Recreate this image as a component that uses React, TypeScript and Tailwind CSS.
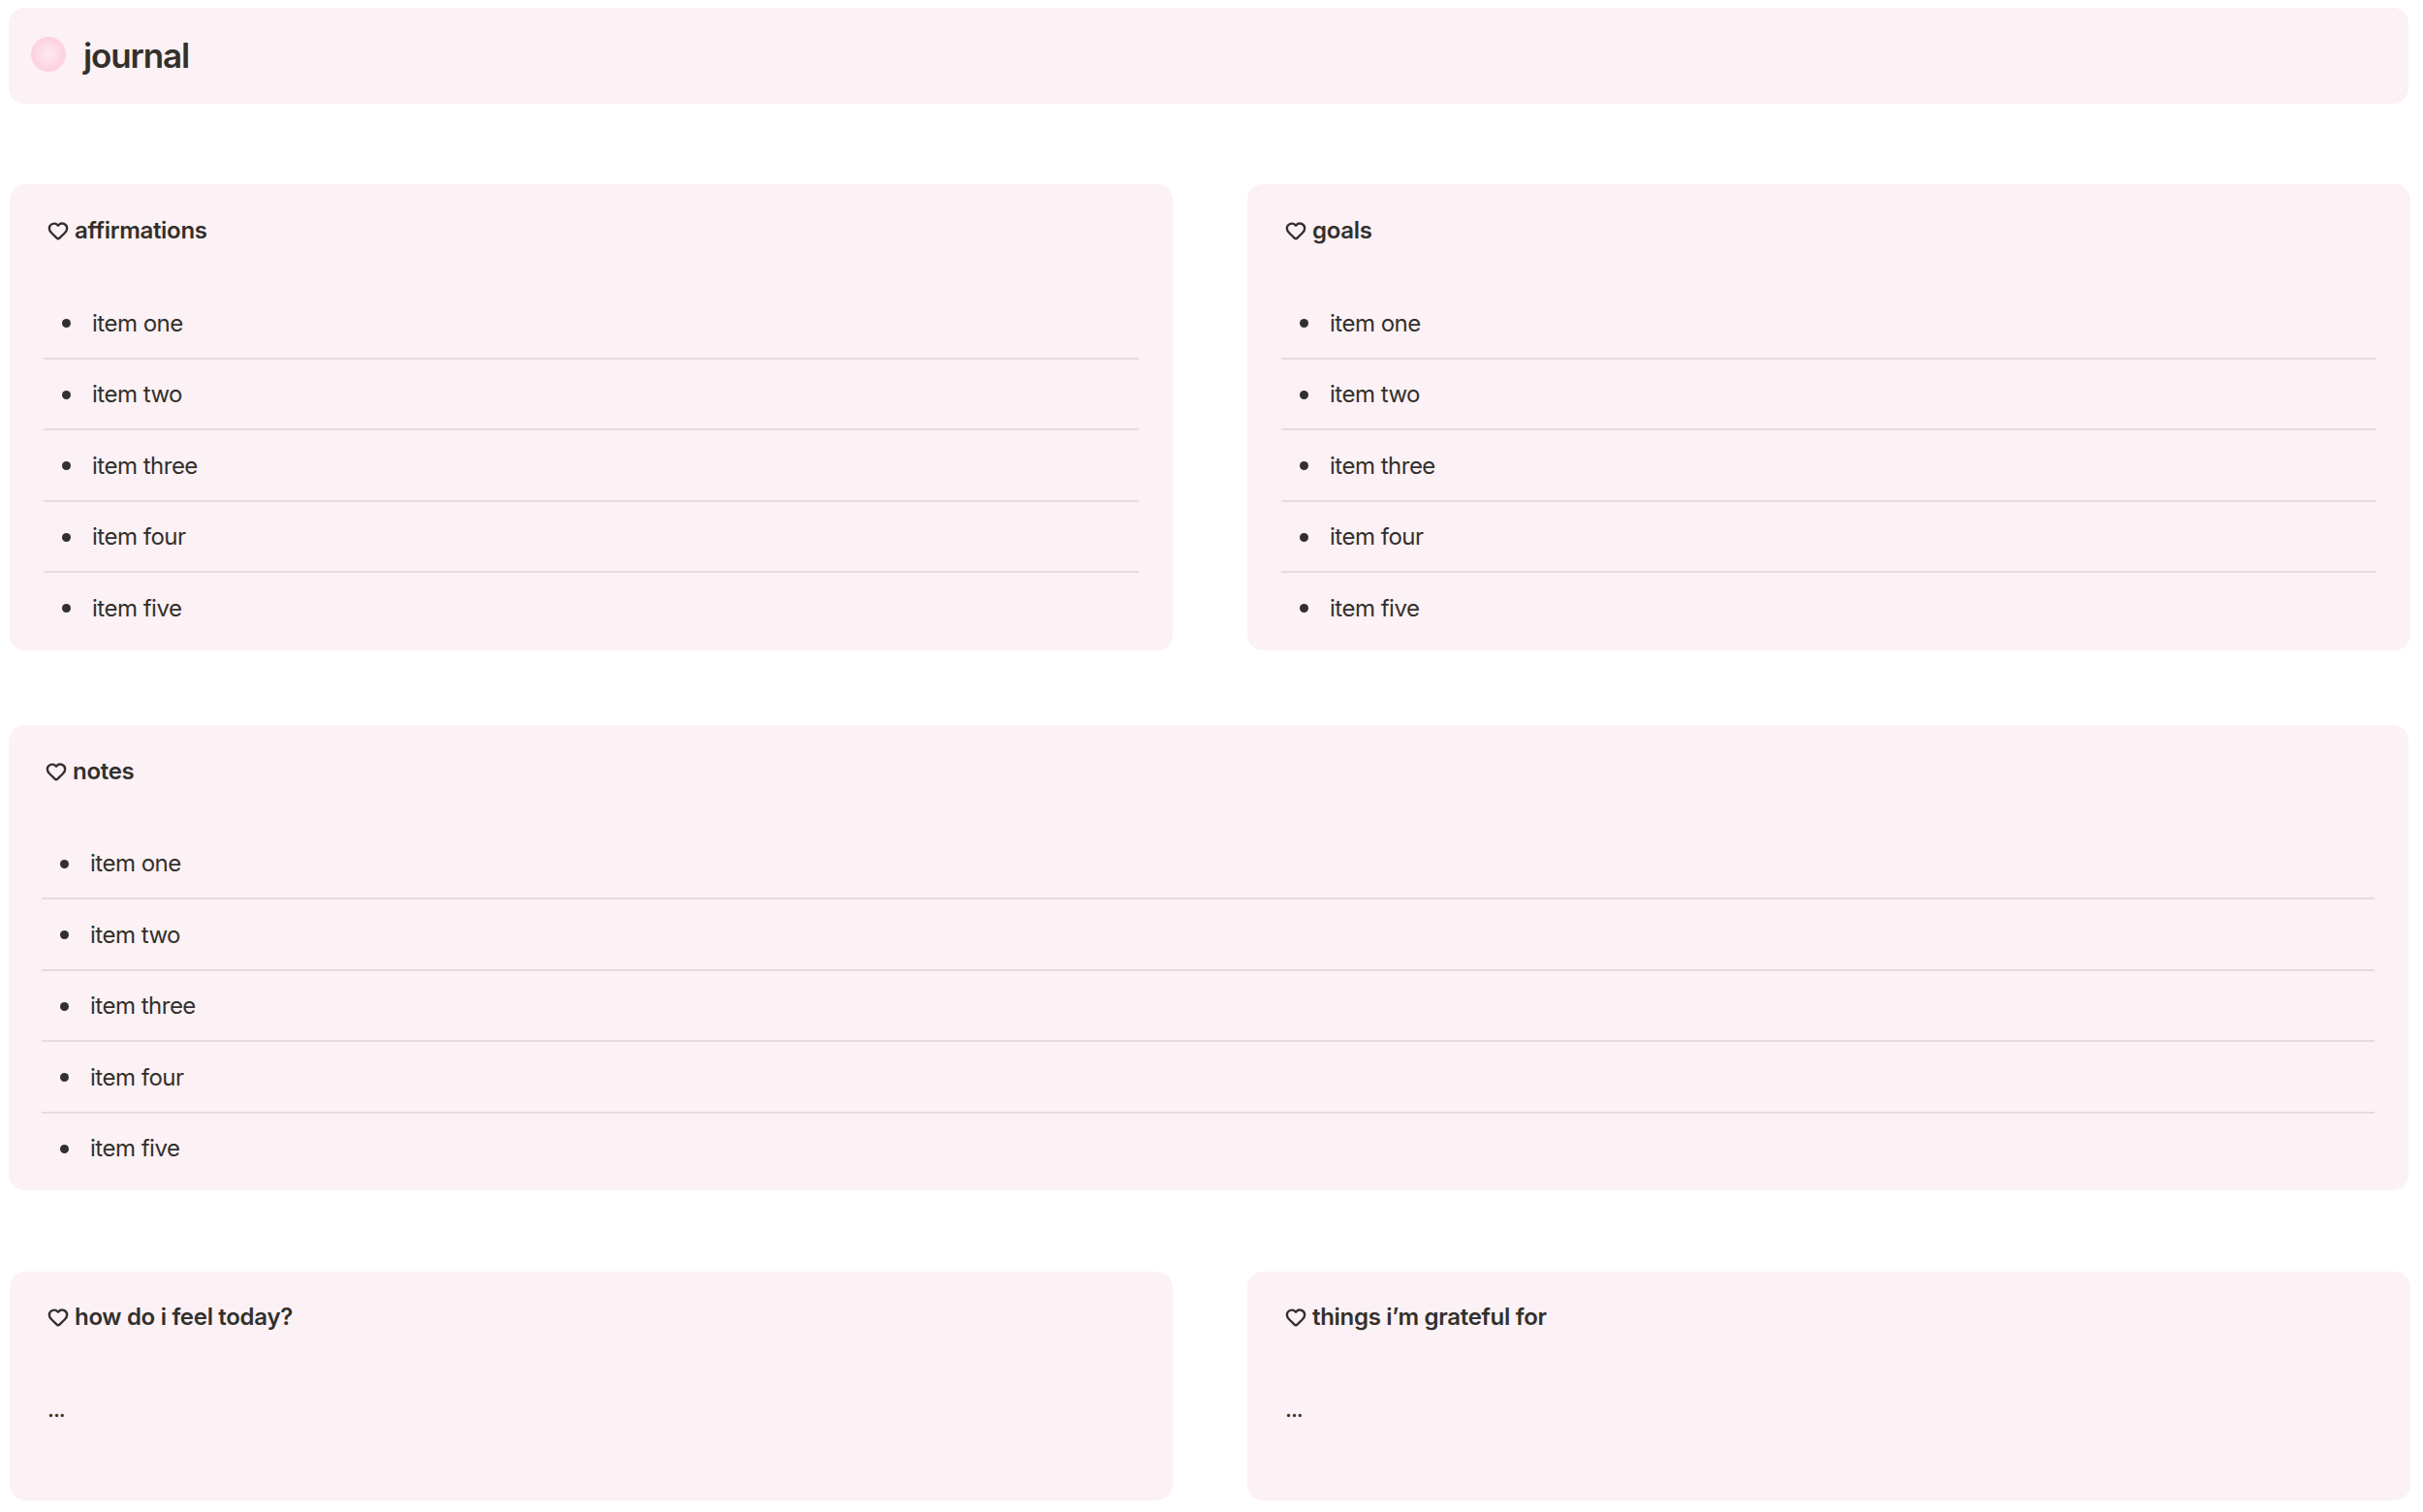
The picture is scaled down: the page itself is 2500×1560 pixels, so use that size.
import { Heart } from "lucide-react";

const items = ["item one", "item two", "item three", "item four", "item five"];

function Title({ children }: { children: string }) {
  return (
    <h2 className="flex h-[34px] items-center text-[24px] font-semibold tracking-[-0.3px] text-[#32302c]">
      <Heart className="mr-[6px] h-[22px] w-[22px] shrink-0" strokeWidth={2.6} />
      {children}
    </h2>
  );
}

function ListCard({ title, className }: { title: string; className: string }) {
  return (
    <section className={`rounded-[16px] bg-[#fcf1f5] pt-[31px] pb-[6px] ${className}`}>
      <div className="pl-[4px]">
        <Title>{title}</Title>
      </div>
      <ul className="mt-[42px] list-none">
        {items.map((item, i) => (
          <li
            key={item}
            className={`flex h-[73.5px] items-center border-b-2 pt-[2px] text-[24px] tracking-[-0.5px] text-[#32302c] ${i < 4 ? "border-[#e6dcdf]" : "border-transparent"}`}
          >
            <span className="ml-[19px] mr-[22px] h-[9px] w-[9px] rounded-full bg-[#32302c]" />
            {item}
          </li>
        ))}
      </ul>
    </section>
  );
}

function NoteCard({ title }: { title: string }) {
  return (
    <section className="h-[236px] w-[1200px] rounded-[16px] bg-[#fcf1f5] pt-[30px] pl-[39px]">
      <Title>{title}</Title>
      <p className="mt-[60px] text-[24px] leading-[36px] tracking-[-1px] text-[#32302c]">...</p>
    </section>
  );
}

export default function App() {
  return (
    <main className="min-h-[1560px] bg-white pt-[8px] font-['Inter',sans-serif]">
      <header className="ml-[9px] flex h-[99px] w-[2476px] items-center rounded-[16px] bg-[#fcf1f5] pl-[23px]">
        <span className="mb-[3px] h-[36px] w-[36px] rounded-full bg-[radial-gradient(circle,#fdeaf0_0%,#fdd3df_62%,#fdd3df_74%,#fcf1f5_100%)]" />
        <h1 className="ml-[18px] text-[35px] font-semibold tracking-[-1.1px] text-[#32302c]">journal</h1>
      </header>

      <div className="mt-[83px] ml-[10px] flex gap-[77px]">
        <ListCard title="affirmations" className="w-[1200px] px-[35px]" />
        <ListCard title="goals" className="w-[1200px] px-[35px]" />
      </div>

      <div className="mt-[77px] ml-[9px]">
        <ListCard title="notes" className="w-[2476px] pl-[34px] pr-[35px]" />
      </div>

      <div className="mt-[84px] ml-[10px] flex gap-[77px]">
        <NoteCard title="how do i feel today?" />
        <NoteCard title="things i’m grateful for" />
      </div>
    </main>
  );
}
